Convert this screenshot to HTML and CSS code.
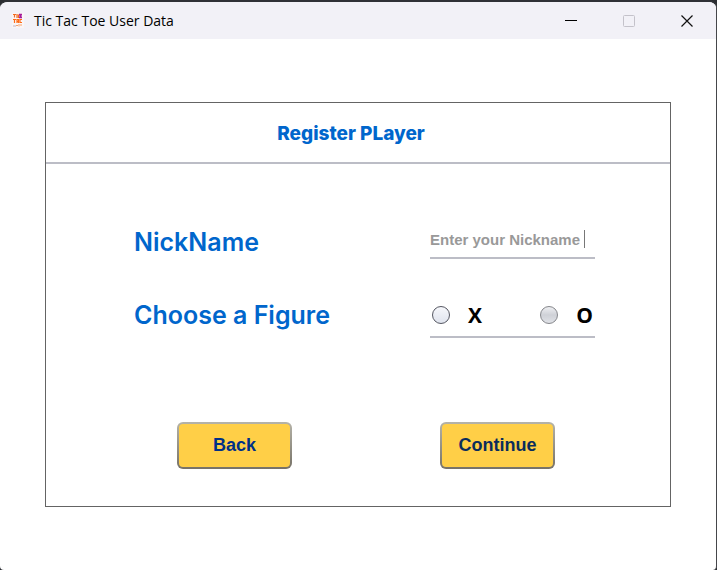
FILE: index.html
```html
<!DOCTYPE html>
<html lang="en">
<head>
<meta charset="utf-8">
<title>Tic Tac Toe User Data</title>
<link rel="stylesheet" href="styles.css">
</head>
<body>
<div class="window">
  <header class="titlebar">
    <svg class="app-icon" width="16" height="16" viewBox="0 0 16 16" fill="none" aria-hidden="true">
      <path fill="#faf5f6" d="M2 0h12v15H2z"/>
      <path stroke="#f36b21" stroke-width="1.2" d="M3 1.500h3M4.500 1.500v3M7 1v4M10.500 2H8.500v2.500H10"/>
      <path stroke="#a41b9b" stroke-width="1.500" d="M9 1.500h3M9.500 3h2M9 4.500h3"/>
      <path stroke="#ff6b17" stroke-width="1.200" d="M3 6.500h3M4.500 6.500v3.500M7 10V6.500h1.500v3.500M7 8.500h2M12 6.500h-2V9.500h2"/>
      <path stroke="#f5a26c" d="M6 12.500h2M9 11v2.500M11 11v2"/>
      <path stroke="#bbb4c6" d="M3 13h3"/>
    </svg>
    <h1 class="window-title">Tic Tac Toe User Data</h1>
    <div class="controls">
      <button class="control" type="button" aria-label="Minimize"><svg width="14" height="14" viewBox="0 0 14 14" stroke="#000"><path d="M1 6.500h12"/></svg></button>
      <button class="control" type="button" aria-label="Maximize" disabled><svg width="14" height="14" viewBox="0 0 14 14" fill="none" stroke="#c4c2ca"><rect x="1.500" y="1.500" width="11" height="11" rx="1"/></svg></button>
      <button class="control" type="button" aria-label="Close"><svg width="14" height="14" viewBox="0 0 14 14" stroke="#111" stroke-width="1.200"><path d="M1.500 1.500l11 11M12.500 1.500l-11 11"/></svg></button>
    </div>
  </header>
  <main class="content">
    <form class="panel">
      <h2 class="panel-title">Register PLayer</h2>
      <div class="fields">
        <label class="label" for="nickname">NickName</label>
        <div class="entry">
          <input class="nickname" id="nickname" type="text" value="Enter your Nickname">
          <span class="caret"></span>
        </div>
        <span class="label" id="figure-label">Choose a Figure</span>
        <div class="figures" role="radiogroup" aria-labelledby="figure-label">
          <label class="figure"><input class="radio" type="radio" name="figure" value="x">X</label>
          <label class="figure"><input class="radio radio-shaded" type="radio" name="figure" value="o">O</label>
        </div>
      </div>
      <div class="actions">
        <button class="action action-back" type="button">Back</button>
        <button class="action" type="button">Continue</button>
      </div>
    </form>
  </main>
</div>
</body>
</html>
```
FILE: styles.css
```css
* { box-sizing: border-box; }

body {
  margin: 0;
  background: #2b2d32;
  font-family: "Liberation Sans", Arial, sans-serif;
}

.window {
  display: flex;
  flex-direction: column;
  min-height: 100vh;
  border-top: 2px solid #2f3136;
  border-right: 1px solid #45464a;
  border-radius: 8px 8px 4px 4px;
  background: #fff;
  overflow: hidden;
}

.titlebar {
  display: flex;
  align-items: center;
  height: 37px;
  padding-left: 10px;
  background: #f2f1f7;
}

.window-title {
  margin: 0 auto 0 8px;
  font: 14px "Open Sans", "Noto Sans", sans-serif;
  color: #000;
}

.controls { display: flex; }

.control {
  display: grid;
  place-items: center;
  width: 58px;
  height: 37px;
  padding: 0;
  border: 0;
  background: none;
}

.content {
  flex: 1;
  padding: 63px 45px;
}

.panel {
  border: 1px solid #646464;
  padding-bottom: 37px;
}

.panel-title {
  margin: 0;
  padding: 21px 14px 18px 0;
  border-bottom: 2px solid #bcbdc6;
  font: 800 19px/20px Inter, "Liberation Sans", sans-serif;
  text-align: center;
  color: #0066cc;
}

.fields {
  display: grid;
  grid-template-columns: 1fr 165px;
  row-gap: 35px;
  padding: 59px 75px 0 88px;
}

.label {
  font: 600 25px/38px Inter, "Liberation Sans", sans-serif;
  color: #0066cc;
}

.entry {
  display: flex;
  align-items: center;
  height: 36px;
  padding-bottom: 2px;
  border-bottom: 2px solid #bcbdc6;
}

.nickname {
  width: 154px;
  padding: 0;
  border: 0;
  outline: 0;
  background: none;
  font: bold 15px "Liberation Sans", Arial, sans-serif;
  color: #999;
}

.caret {
  width: 1px;
  height: 18px;
  background: #777;
}

.figures {
  display: flex;
  justify-content: space-between;
  height: 42px;
  padding: 0 2px 2px;
  border-bottom: 2px solid #bcbdc6;
}

.figure {
  display: flex;
  align-items: center;
  gap: 18px;
  font: bold 21px/24px "Open Sans", sans-serif;
  color: #000;
}

.radio {
  appearance: none;
  width: 18px;
  height: 18px;
  margin: 0;
  border: 1px solid #555762;
  border-radius: 50%;
  background: linear-gradient(#f6f7fb, #e0e4ee);
}

.radio-shaded {
  border-color: #85868b;
  background: linear-gradient(#eeeff2, #cfd1d7 50%, #e0e2e7);
}

.actions {
  display: flex;
  justify-content: space-between;
  padding: 84px 115px 0 131px;
}

.action {
  width: 115px;
  height: 47px;
  border: 2px solid transparent;
  border-radius: 6px;
  background:
    linear-gradient(#ffcf47, #ffcf47) padding-box,
    linear-gradient(#b5b3a8, #777267) border-box;
  font: bold 18px "Liberation Sans", Arial, sans-serif;
  color: #0a2c5c;
}

.action-back { color: #003087; }
```
